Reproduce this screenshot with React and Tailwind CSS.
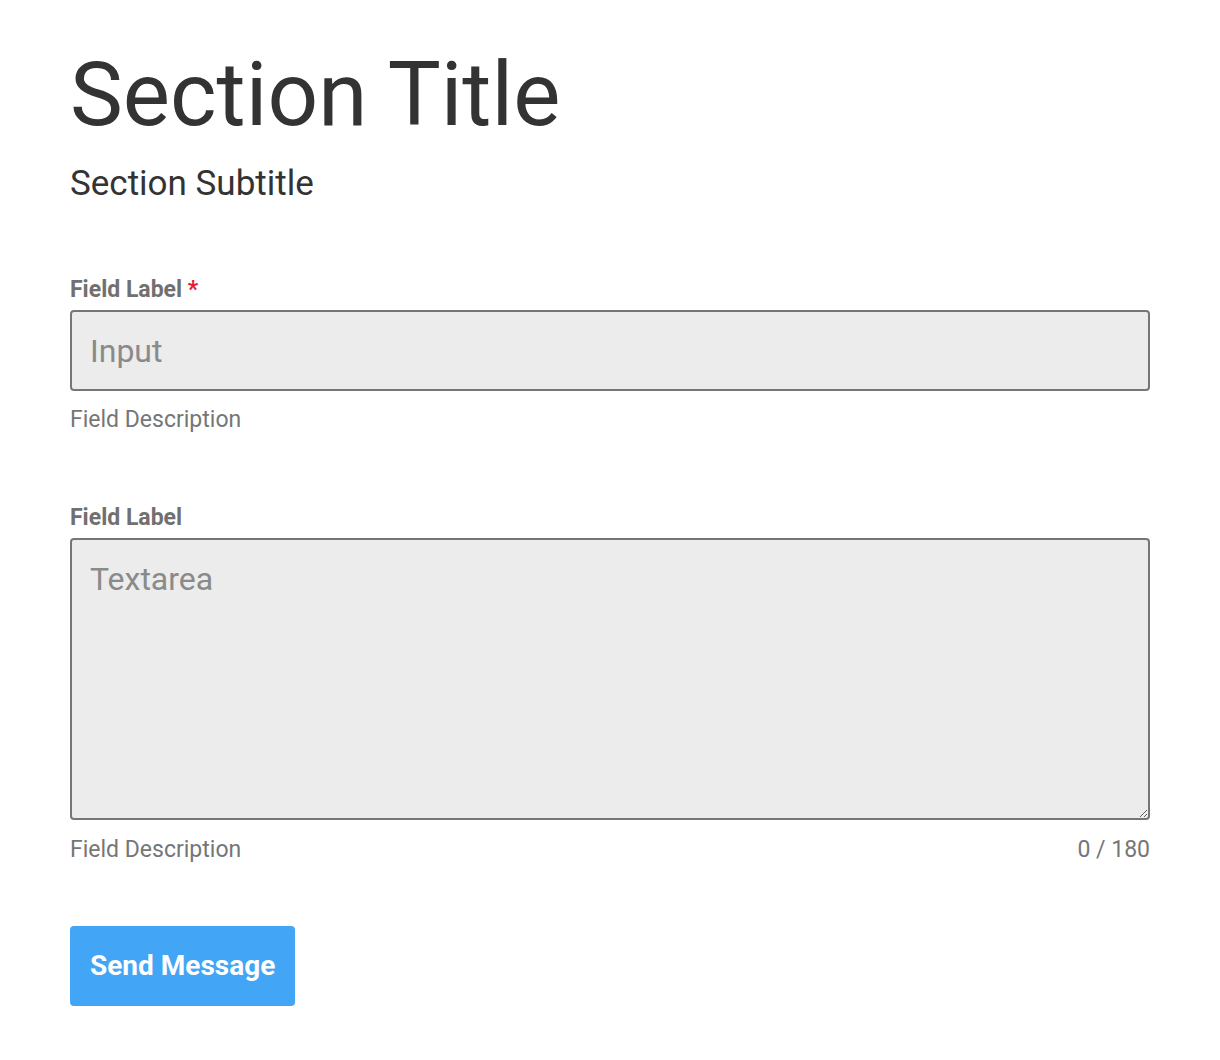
export default function App() {
  return (
    <div className="bg-white min-h-[1060px] px-[70px] pt-[40px] font-[Roboto,sans-serif]">
      <h1 className="text-[89px] leading-[110px] font-normal text-[#333333]">Section Title</h1>
      <h2 className="text-[35px] leading-[40px] font-normal text-[#333333] mt-[14px]">Section Subtitle</h2>

      <div className="mt-[72px]">
        <label className="block text-[23px] leading-[28px] font-bold text-[#707070]">
          Field Label <span className="text-[#e8192c]">*</span>
        </label>
        <input
          className="mt-[6px] block w-full h-[81px] bg-[#ececec] border-2 border-[#767676] rounded-[4px] px-[18px] text-[32px] text-[#333] placeholder:text-[#8a8a8a] outline-none"
          placeholder="Input"
        />
        <div className="mt-[15px] text-[23px] leading-[28px] text-[#767676]">Field Description</div>
      </div>

      <div className="mt-[70px]">
        <label className="block text-[23px] leading-[28px] font-bold text-[#707070]">Field Label</label>
        <textarea
          className="mt-[6px] block w-full h-[282px] bg-[#ececec] border-2 border-[#767676] rounded-[4px] px-[18px] py-[20px] text-[32px] leading-[38px] text-[#333] placeholder:text-[#8a8a8a] outline-none"
          placeholder="Textarea"
        />
        <div className="mt-[16px] flex justify-between text-[23px] leading-[28px] text-[#767676]">
          <span>Field Description</span>
          <span>0 / 180</span>
        </div>
      </div>

      <button className="mt-[62px] h-[80px] px-[20px] bg-[#42a5f5] rounded-[4px] text-white text-[28px] font-bold">
        Send Message
      </button>
    </div>
  );
}
